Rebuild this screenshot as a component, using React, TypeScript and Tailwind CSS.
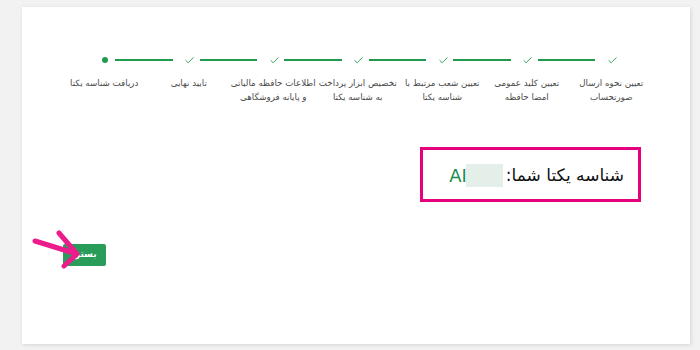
import React from 'react';
import { Check } from 'lucide-react';

const fa = { fontFamily: '"DejaVu Sans", "Noto Sans", sans-serif' };

// مراحل از چپ به راست (ترتیب نمایش)
const steps = [
  { done: false, label: ['دریافت شناسه یکتا'] },
  { done: true, label: ['تایید نهایی'] },
  { done: true, label: ['اطلاعات حافظه مالیاتی', 'و پایانه فروشگاهی'] },
  { done: true, label: ['تخصیص ابزار پرداخت', 'به شناسه یکتا'] },
  { done: true, label: ['تعیین شعب مرتبط با', 'شناسه یکتا'] },
  { done: true, label: ['تعیین کلید عمومی', 'امضا حافظه'] },
  { done: true, label: ['تعیین نحوه ارسال', 'صورتحساب'] },
];

const StepIcon: React.FC<{ done: boolean }> = ({ done }) => (
  <div className="w-[18px] h-[18px] flex items-center justify-center shrink-0">
    {done ? (
      <Check size={11} strokeWidth={2} className="text-[#1f9a4e]" />
    ) : (
      <span className="w-[6px] h-[6px] rounded-full bg-[#1f9a4e]" />
    )}
  </div>
);

export default function App() {
  return (
    <div className="relative min-h-screen bg-[#f2f2f2] pt-[7px] pl-[22px]" style={fa}>
      <div className="w-[668px] h-[337px] bg-white shadow-[1px_1px_4px_rgba(0,0,0,0.12)] flex flex-col">
        {/* stepper icons */}
        <div className="flex items-center pt-[44px] pl-[74px]">
          {steps.map((s, i) => (
            <React.Fragment key={i}>
              <StepIcon done={s.done} />
              {i < steps.length - 1 && (
                <div className="w-[57.5px] h-[2px] bg-[#1f9a4e] ml-px mr-[8px] shrink-0" />
              )}
            </React.Fragment>
          ))}
        </div>

        {/* stepper labels */}
        <div className="flex pl-[40px] mt-[7px]">
          {steps.map((s, i) => (
            <div
              key={i}
              dir="rtl"
              className="w-[84.5px] shrink-0 flex flex-col items-center text-[8.7px] leading-[14px] text-[#4a4a4a] whitespace-nowrap"
            >
              {s.label.map((l, j) => (
                <span key={j}>{l}</span>
              ))}
            </div>
          ))}
        </div>

        {/* unique id */}
        <div className="flex justify-end pr-[49px] mt-[43px]">
          <div
            dir="rtl"
            className="w-[221px] h-[55px] border-[3px] border-[#e5007d] flex items-center pr-[14px] pt-[2px] text-[17px] text-[#111]"
          >
            <span>شناسه یکتا شما:</span>
            <span dir="ltr" className="inline-flex items-center mr-[3px]">
              <span className="text-[#1b8c50] text-[18px]">AI</span>
              <span className="w-[37px] h-[23px] bg-[#e4efe9] -ml-px" />
            </span>
          </div>
        </div>

        {/* close button */}
        <div className="pl-[41px] mt-[42px]">
          <button
            dir="rtl"
            className="w-[43px] h-[22px] rounded-[2px] bg-[#2a9c5a] text-white text-[9px] font-bold flex items-center justify-center"
          >
            بستن
          </button>
        </div>
      </div>

      {/* annotation arrow */}
      <svg
        className="absolute left-[28px] top-[228px]"
        width="56"
        height="42"
        viewBox="0 0 56 42"
      >
        <g stroke="#ec1c8c" strokeWidth="5" strokeLinecap="round" fill="none">
          <line x1="7" y1="13" x2="46" y2="25" />
          <polyline points="31,5 49,26 36,38" strokeLinejoin="round" />
        </g>
      </svg>
    </div>
  );
}
